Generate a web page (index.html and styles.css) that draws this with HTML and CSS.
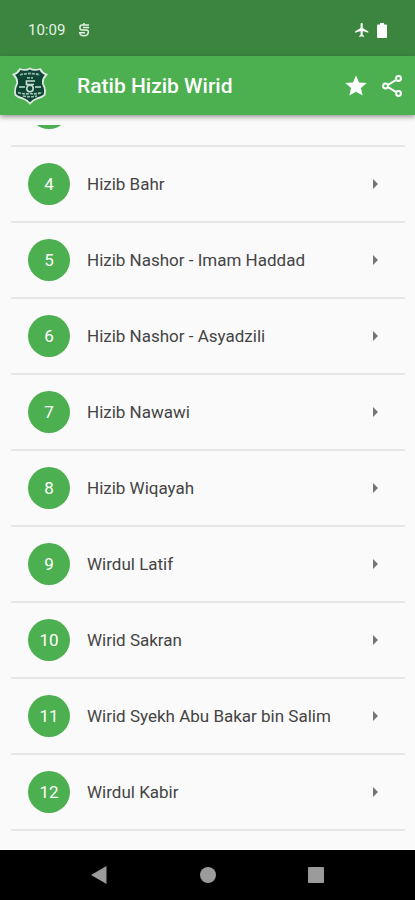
FILE: index.html
```html
<!DOCTYPE html>
<html lang="id">
<head>
<meta charset="utf-8">
<meta name="viewport" content="width=device-width, initial-scale=1">
<title>Ratib Hizib Wirid</title>
<link rel="stylesheet" href="styles.css">
</head>
<body>
<div class="status">
  <span class="time">10:09</span>
  <svg class="status-s" viewBox="0 0 12 14"><path d="M11 2H4Q2 2 2 4V5Q2 7 4 7H8.500Q10.300 7 10.300 9Q10.300 12.700 6 12.700Q2 12.700 1.700 9.700H7M5 4.500H11M6 0V2" fill="none" stroke="#e4f2e4" stroke-width="1.500"/></svg>
  <svg class="plane" viewBox="2 2 20 20"><path fill="#fff" d="M21 16v-2l-8-5V3.500a1.500 1.500 0 0 0-3 0V9l-8 5v2l8-2.500V19l-2 1.500V22l3.500-1 3.500 1v-1.500L13 19v-5.500z"/></svg>
  <svg class="battery" viewBox="0 0 10 15"><path fill="#fff" d="M3 0h4v1.500h2q1 0 1 1V14q0 1-1 1H1q-1 0-1-1V2.500q0-1 1-1h2z"/></svg>
</div>
<header class="appbar">
  <svg class="crest" viewBox="0 0 36 38">
    <path d="M18 1.500Q22 4 28 2Q30 6 34.500 7.500Q30 12 31 17Q34 22 32.500 28Q29 31 25 31.500Q21 33 18 36.500Q15 33 11 31.500Q7 31 3.500 28Q2 22 5 17Q6 12 1.500 7.500Q6 6 8 2Q14 4 18 1.500Z" fill="#0f4534" stroke="#dce8e0" stroke-width="1.800"/>
    <path d="M8 8Q18 5 28 8M15 10.800H21" fill="none" stroke="#8fb5a5" stroke-width="1.800" stroke-dasharray="3 1"/>
    <path d="M23 14H14.500V17.500H22M7 20H13M23 20H29" fill="none" stroke="#c5ddd2" stroke-width="1.700"/>
    <circle cx="18" cy="21.500" r="3.200" fill="none" stroke="#c5ddd2" stroke-width="1.600"/>
    <path d="M6 25.500Q12 27.500 18 26.500Q24 27.500 30 25.500M11 29Q18 30.500 25 29" fill="none" stroke="#9fc3b3" stroke-width="1.700" stroke-dasharray="3 1"/>
  </svg>
  <h1>Ratib Hizib Wirid</h1>
  <button class="action" aria-label="Favorit"><svg viewBox="0 0 24 24"><path fill="#fff" d="M12 17.770 18.680 21.500l-1.760-7.430L22.700 9.040l-7.630-.65L12 1.500 8.930 8.390 1.300 9.040l5.780 5.030L5.320 21.500z"/></svg></button>
  <button class="action" aria-label="Bagikan"><svg viewBox="0 0 24 24" fill="none" stroke="#fff" stroke-width="2"><path d="M8 10.800 15.800 6.200M8 13.200l7.800 4.600"/><circle cx="18.500" cy="4.500" r="2.400"/><circle cx="5.500" cy="12" r="2.400"/><circle cx="18.500" cy="19.500" r="2.400"/></svg></button>
</header>
<main class="viewport">
  <ul class="list">
    <li><div class="row"><span class="num"></span></div></li>
    <li><button class="row"><span class="num">4</span><span class="name">Hizib Bahr</span><span class="arrow"></span></button></li>
    <li><button class="row"><span class="num">5</span><span class="name">Hizib Nashor - Imam Haddad</span><span class="arrow"></span></button></li>
    <li><button class="row"><span class="num">6</span><span class="name">Hizib Nashor - Asyadzili</span><span class="arrow"></span></button></li>
    <li><button class="row"><span class="num">7</span><span class="name">Hizib Nawawi</span><span class="arrow"></span></button></li>
    <li><button class="row"><span class="num">8</span><span class="name">Hizib Wiqayah</span><span class="arrow"></span></button></li>
    <li><button class="row"><span class="num">9</span><span class="name">Wirdul Latif</span><span class="arrow"></span></button></li>
    <li><button class="row"><span class="num">10</span><span class="name">Wirid Sakran</span><span class="arrow"></span></button></li>
    <li><button class="row"><span class="num">11</span><span class="name">Wirid Syekh Abu Bakar bin Salim</span><span class="arrow"></span></button></li>
    <li><button class="row"><span class="num">12</span><span class="name">Wirdul Kabir</span><span class="arrow"></span></button></li>
  </ul>
</main>
<nav class="navbar">
  <button aria-label="Kembali"><svg viewBox="0 0 18 18"><path fill="#9b9b9b" d="M15.500 0v18L0 9z"/></svg></button>
  <button aria-label="Beranda"><svg viewBox="0 0 18 18"><circle cx="9" cy="9" r="8" fill="#9b9b9b"/></svg></button>
  <button aria-label="Terkini"><svg viewBox="0 0 18 18"><rect x="1" y="1" width="16" height="16" rx="1" fill="#9b9b9b"/></svg></button>
</nav>
</body>
</html>
```
FILE: styles.css
```css
* { box-sizing: border-box; }

body {
  margin: 0;
  height: 100vh;
  display: flex;
  flex-direction: column;
  background: #fafafa;
  color: #444;
  font-family: Roboto, "Liberation Sans", sans-serif;
}

button {
  border: 0;
  padding: 0;
  background: none;
  color: inherit;
  font: inherit;
  text-align: left;
}

svg { display: block; }

.status {
  flex: none;
  height: 56px;
  padding: 4px 28px 0;
  display: flex;
  align-items: center;
  background: #3b853f;
  color: #e4f2e4;
  font-size: 15px;
}

.status-s { width: 12px; height: 14px; margin-left: 13px; }
.plane { width: 14px; height: 14px; margin-left: auto; }
.battery { width: 10px; height: 15px; margin-left: 8px; }

.appbar {
  flex: none;
  height: 59px;
  padding: 0 11px 0 12px;
  display: flex;
  align-items: center;
  background: #4caf50;
  color: #fff;
  box-shadow: 0 2px 5px rgba(0, 0, 0, 0.4);
}

.crest { width: 36px; height: 38px; margin-right: 29px; }

.appbar h1 {
  flex: 1;
  margin: 0;
  font-size: 21px;
  font-weight: 500;
}

.action { margin-left: 12px; }
.action svg { width: 24px; height: 24px; }

.viewport {
  flex: 1;
  min-height: 0;
  margin-top: 10px;
  padding: 0 10px 19px 11px;
  display: flex;
  flex-direction: column;
  justify-content: flex-end;
  overflow: hidden;
}

.list {
  margin: 0;
  padding: 0;
  list-style: none;
}

.row {
  width: 100%;
  height: 76px;
  padding: 0 27px 0 17px;
  display: flex;
  align-items: center;
  border-bottom: 2px solid #e6e6e6;
  font-size: 17px;
}

.num {
  width: 42px;
  height: 42px;
  margin-right: 17px;
  border-radius: 50%;
  display: flex;
  align-items: center;
  justify-content: center;
  background: #4caf50;
  color: #fff;
}

.name { flex: 1; }

.arrow {
  border: 5px solid transparent;
  border-left-color: #757575;
  border-right-width: 0;
}

.navbar {
  flex: none;
  height: 50px;
  display: flex;
  align-items: center;
  justify-content: center;
  gap: 90px;
  background: #000;
}

.navbar svg { width: 18px; height: 18px; }
```
